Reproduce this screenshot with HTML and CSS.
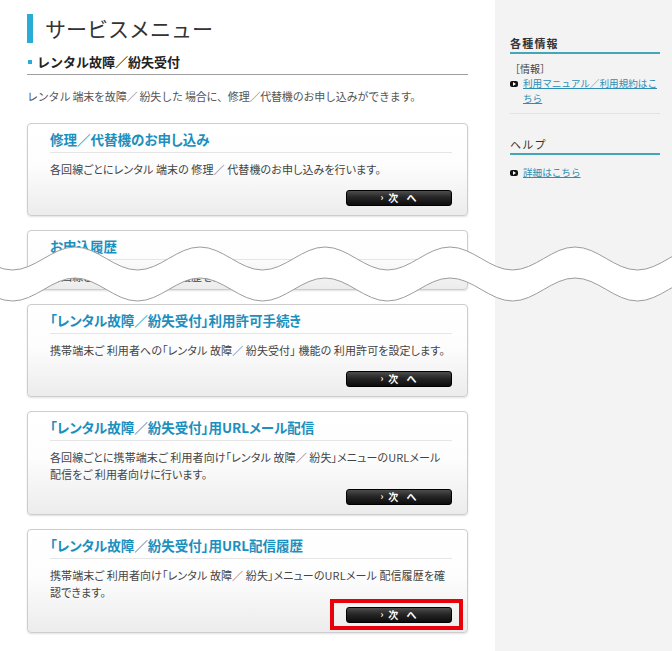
FILE: index.html
```html
<!DOCTYPE html>
<html lang="ja">
<head>
  <meta charset="UTF-8" />
  <title>サービスメニュー</title>
  <link rel="stylesheet" href="styles.css">
</head>
<body>
  <div class="page">
    <main class="main">
      <h1 class="page-title">サービスメニュー</h1>
      <h2 class="section-title">レンタル故障／紛失受付</h2>
      <p class="lead">レンタル 端末を故障／ 紛失した 場合に、修理／代替機のお申し込みができます。</p>

      <div class="menu-list">
        <div class="menu-card">
          <h3 class="menu-card-title">修理／代替機のお申し込み</h3>
          <p class="menu-card-text">各回線ごとにレンタル 端末の 修理／ 代替機のお申し込みを行います。</p>
          <div class="menu-card-action"><a class="next-btn" href="#"><span class="arrow">›</span>次 へ</a></div>
        </div>

        <div class="menu-card cut">
          <h3 class="menu-card-title">お申込履歴</h3>
          <p class="menu-card-text">各回線ごとにお申し込みの 履歴を確認できます。</p>
        </div>

        <div class="menu-card">
          <h3 class="menu-card-title">「レンタル故障／紛失受付」利用許可手続き</h3>
          <p class="menu-card-text">携帯端末ご 利用者への「レンタル 故障／ 紛失受付」 機能の 利用許可を設定します。</p>
          <div class="menu-card-action"><a class="next-btn" href="#"><span class="arrow">›</span>次 へ</a></div>
        </div>

        <div class="menu-card">
          <h3 class="menu-card-title">「レンタル故障／紛失受付」用URLメール配信</h3>
          <p class="menu-card-text">各回線ごとに携帯端末ご 利用者向け「レンタル 故障／ 紛失」メニューのURLメール<br>配信をご 利用者向けに行います。</p>
          <div class="menu-card-action"><a class="next-btn" href="#"><span class="arrow">›</span>次 へ</a></div>
        </div>

        <div class="menu-card">
          <h3 class="menu-card-title">「レンタル故障／紛失受付」用URL配信履歴</h3>
          <p class="menu-card-text">携帯端末ご 利用者向け「レンタル 故障／ 紛失」メニューのURLメール 配信履歴を確<br>認できます。</p>
          <div class="menu-card-action">
            <a class="next-btn marked" href="#"><span class="arrow">›</span>次 へ</a>
          </div>
        </div>
      </div>
    </main>

    <aside class="side">
      <h4 class="side-title">各種情報</h4>
      <p class="side-label">［情報］</p>
      <a class="side-link" href="#"><span class="side-icon"></span><span>利用マニュアル／利用規約はこちら</span></a>
      <hr class="side-sep">

      <h4 class="side-title help">ヘルプ</h4>
      <a class="side-link first" href="#"><span class="side-icon"></span><span>詳細はこちら</span></a>
    </aside>

    <!-- 省略線 -->
    <svg class="cut-line" viewBox="0 0 672 70" width="672" height="70">
      <path fill="#fff" d="M-50 7
        c22.76 0 39.74 23 62.5 23 c22.76 0 39.74 -23 62.5 -23
        c22.76 0 39.74 23 62.5 23 c22.76 0 39.74 -23 62.5 -23
        c22.76 0 39.74 23 62.5 23 c22.76 0 39.74 -23 62.5 -23
        c22.76 0 39.74 23 62.5 23 c22.76 0 39.74 -23 62.5 -23
        c22.76 0 39.74 23 62.5 23 c22.76 0 39.74 -23 62.5 -23
        c22.76 0 39.74 23 62.5 23 c22.76 0 39.74 -23 62.5 -23
        L700 38
        c-22.76 0 -39.74 23 -62.5 23 c-22.76 0 -39.74 -23 -62.5 -23
        c-22.76 0 -39.74 23 -62.5 23 c-22.76 0 -39.74 -23 -62.5 -23
        c-22.76 0 -39.74 23 -62.5 23 c-22.76 0 -39.74 -23 -62.5 -23
        c-22.76 0 -39.74 23 -62.5 23 c-22.76 0 -39.74 -23 -62.5 -23
        c-22.76 0 -39.74 23 -62.5 23 c-22.76 0 -39.74 -23 -62.5 -23
        c-22.76 0 -39.74 23 -62.5 23 c-22.76 0 -39.74 -23 -62.5 -23 Z"/>
      <path fill="none" stroke="#9c9c9c" stroke-width="1" d="M-50 7
        c22.76 0 39.74 23 62.5 23 c22.76 0 39.74 -23 62.5 -23
        c22.76 0 39.74 23 62.5 23 c22.76 0 39.74 -23 62.5 -23
        c22.76 0 39.74 23 62.5 23 c22.76 0 39.74 -23 62.5 -23
        c22.76 0 39.74 23 62.5 23 c22.76 0 39.74 -23 62.5 -23
        c22.76 0 39.74 23 62.5 23 c22.76 0 39.74 -23 62.5 -23
        c22.76 0 39.74 23 62.5 23 c22.76 0 39.74 -23 62.5 -23"/>
      <path fill="none" stroke="#9c9c9c" stroke-width="1" d="M-50 38
        c22.76 0 39.74 23 62.5 23 c22.76 0 39.74 -23 62.5 -23
        c22.76 0 39.74 23 62.5 23 c22.76 0 39.74 -23 62.5 -23
        c22.76 0 39.74 23 62.5 23 c22.76 0 39.74 -23 62.5 -23
        c22.76 0 39.74 23 62.5 23 c22.76 0 39.74 -23 62.5 -23
        c22.76 0 39.74 23 62.5 23 c22.76 0 39.74 -23 62.5 -23
        c22.76 0 39.74 23 62.5 23 c22.76 0 39.74 -23 62.5 -23"/>
    </svg>
  </div>
</body>
</html>
```

FILE: styles.css
```css
body {
  margin: 0;
  padding: 0;
  font-family: "Noto Sans CJK JP", "Noto Sans", sans-serif;
  color: #333;
  background: #fff;
}

.page {
  position: relative;
  display: flex;
  min-height: 651px;
  overflow: hidden;
}

/* メイン */
.main {
  width: 495px;
  flex-shrink: 0;
  box-sizing: border-box;
  padding: 14px 27px 0 27px;
}

.page-title {
  margin: 0;
  border-left: 6px solid #29acd6;
  padding-left: 12px;
  font-size: 21px;
  line-height: 29px;
  font-weight: normal;
  color: #333;
}

.section-title {
  position: relative;
  margin: 10px 0 0;
  padding: 0 0 3px 10px;
  font-size: 13px;
  line-height: 18px;
  font-weight: bold;
  color: #222;
  border-bottom: 1px solid #9e9e9e;
}

.section-title::before {
  content: "";
  position: absolute;
  left: 1px;
  top: 7px;
  width: 4px;
  height: 4px;
  background: #29acd6;
}

.lead {
  margin: 13px 0 0;
  font-size: 11px;
  line-height: 16px;
  color: #555;
  letter-spacing: -0.2px;
}

.menu-list {
  margin-top: 19px;
}

.menu-card {
  border: 1px solid #cdcdcd;
  border-radius: 4px;
  padding: 6px 15px 9px 22px;
  background: linear-gradient(#fff 0%, #fdfdfd 45%, #ececec 100%);
  box-shadow: 0 1px 2px rgba(0,0,0,0.12);
}

.menu-card + .menu-card {
  margin-top: 14px;
}

.menu-card.cut {
  box-sizing: border-box;
  height: 60px;
  overflow: hidden;
}

.menu-card-title {
  margin: 0;
  padding-bottom: 4px;
  font-size: 13.5px;
  line-height: 18px;
  font-weight: bold;
  color: #1b8fbd;
  border-bottom: 1px solid #e6e6e6;
  font-feature-settings: "palt";
}

.menu-card-text {
  margin: 8px 0 0;
  min-height: 23px;
  font-size: 11px;
  line-height: 17px;
  color: #444;
  letter-spacing: 0.1px;
  white-space: nowrap;
  font-feature-settings: "palt";
}

.menu-card-action {
  display: flex;
  justify-content: flex-end;
  margin-top: 6px;
}

.next-btn {
  position: relative;
  display: flex;
  align-items: center;
  justify-content: center;
  width: 106px;
  height: 16px;
  box-sizing: border-box;
  border: 1px solid #000;
  border-radius: 3px;
  background: linear-gradient(#4d4d4d 0%, #262626 45%, #0d0d0d 100%);
  color: #fff;
  font-size: 10px;
  font-weight: bold;
  letter-spacing: 3px;
  text-decoration: none;
  line-height: 14px;
  padding-left: 2px;
}

.next-btn .arrow {
  font-size: 9px;
  margin-right: 5px;
  letter-spacing: 0;
}

.next-btn.marked::after {
  content: "";
  position: absolute;
  left: -17px;
  right: -12px;
  top: -9px;
  bottom: -8px;
  border: 4px solid #e8000b;
}

/* サイド */
.side {
  flex: 1;
  background: #f3f3f3;
  padding: 35px 12px 0 15px;
}

.side-title {
  margin: 0;
  padding-bottom: 1px;
  font-size: 11px;
  line-height: 16px;
  letter-spacing: 1.2px;
  font-weight: bold;
  color: #333;
  border-bottom: 2px solid #42a7b6;
}

.side-title.help {
  margin-top: 22px;
  font-weight: normal;
}

.side-label {
  margin: 7px 0 0;
  font-size: 10px;
  line-height: 15px;
  color: #444;
}

.side-link {
  display: flex;
  align-items: flex-start;
  font-size: 9.6px;
  line-height: 15px;
  color: #2f8db3;
}

.side-link.first {
  margin-top: 10px;
}

.side-icon {
  flex-shrink: 0;
  position: relative;
  width: 8px;
  height: 6px;
  margin: 5px 5px 0 0;
  border-radius: 2px;
  background: #111;
}

.side-icon::after {
  content: "";
  position: absolute;
  left: 3px;
  top: 1px;
  border-left: 3px solid #fff;
  border-top: 2px solid transparent;
  border-bottom: 2px solid transparent;
}

.side-sep {
  margin: 7px 0 0;
  border: 0;
  border-top: 1px solid #e2e2e2;
}

/* 省略線 */
.cut-line {
  position: absolute;
  left: 0;
  top: 240px;
  pointer-events: none;
}
```
